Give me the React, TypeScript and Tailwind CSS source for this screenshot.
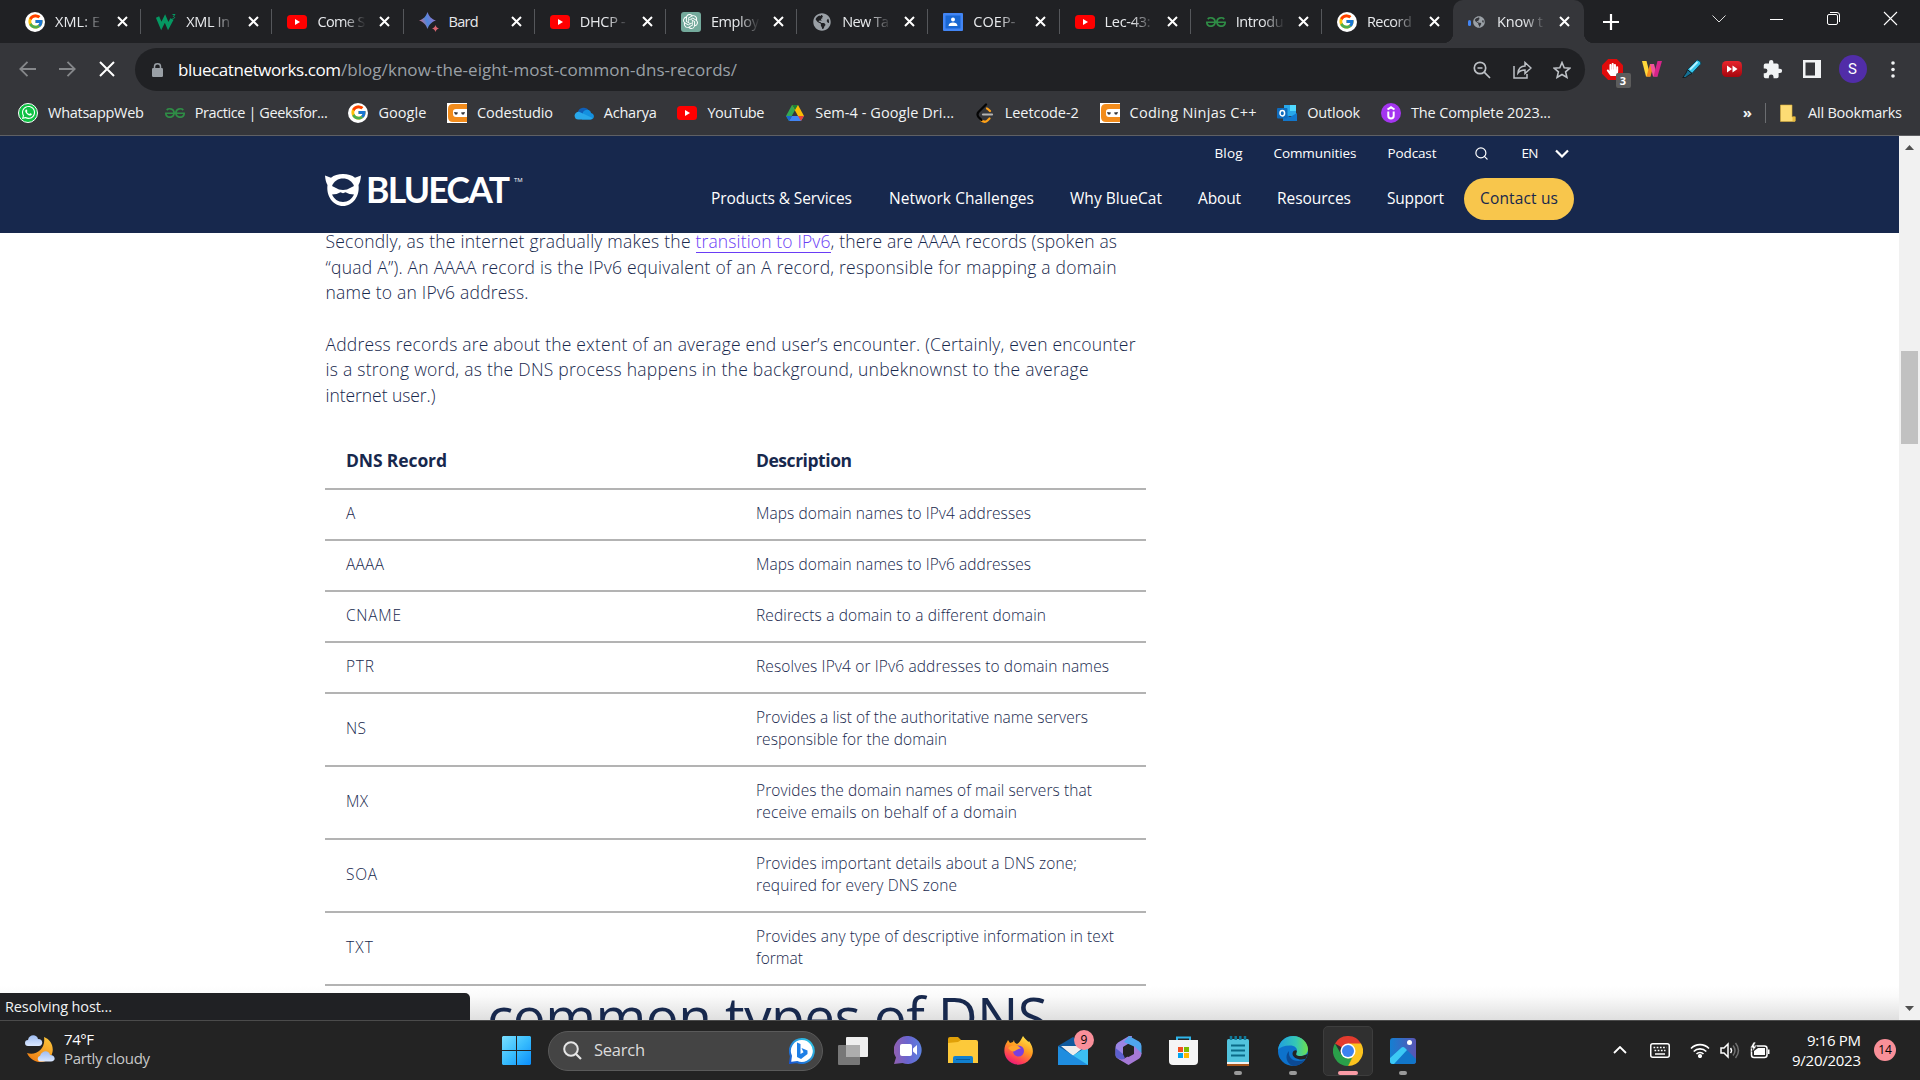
import { useLayoutEffect, useRef, useState, type ReactNode } from "react";
import { FcGoogle } from "react-icons/fc";
import { FaWhatsapp, FaGlobeAmericas, FaHandPaper } from "react-icons/fa";
import { SiGeeksforgeeks, SiOpenai } from "react-icons/si";
import { Search } from "lucide-react";

/** Single line of text whose tracking is adjusted so that it fills a measured width. */
function Fit({ w, className = "", children }: { w: number; className?: string; children: ReactNode }) {
  const ref = useRef<HTMLSpanElement>(null);
  const [spacing, setSpacing] = useState(0);
  useLayoutEffect(() => {
    const el = ref.current;
    if (!el) return;
    const count = (el.textContent ?? "").length;
    if (count > 1) setSpacing((w - el.getBoundingClientRect().width) / (count - 1));
  }, [w]);
  return (
    <span className={"block shrink-0 whitespace-nowrap " + className} style={{ width: w }}>
      <span ref={ref} style={{ letterSpacing: spacing }}>{children}</span>
    </span>
  );
}

const UI = "font-['Open_Sans','Noto_Sans',sans-serif]";

/* ---------- favicons ---------- */
function Google() {
  return (
    <span className="flex size-5 items-center justify-center rounded-full bg-white">
      <FcGoogle size={17} />
    </span>
  );
}
function YouTube() {
  return (
    <svg className="h-5 w-5" viewBox="0 0 20 20">
      <rect y="3" width="20" height="14" rx="3.500" fill="#f00" />
      <path d="M8 7v6l5-3z" fill="#fff" />
    </svg>
  );
}
function W3() {
  return (
    <svg className="h-5 w-5" viewBox="0 0 20 20" fill="none">
      <path d="M1.500 5l3.800 9L9 6.500l3.200 7.500L16 7" stroke="#059862" strokeWidth="3.600" />
      <path d="M16.500 2.500h2.500l-1.700 2c2 .2 1.700 2.500-.8 2" stroke="#059862" strokeWidth="1" />
    </svg>
  );
}
function Bard() {
  return (
    <svg className="h-5 w-5" viewBox="0 0 20 20">
      <defs>
        <linearGradient id="bard" x1="0" x2="1" y1=".7" y2=".3">
          <stop offset="0" stopColor="#e8697b" /><stop offset=".45" stopColor="#4e87dc" /><stop offset="1" stopColor="#9b72cb" />
        </linearGradient>
      </defs>
      <path d="M8.500 0c1.500 4.500 4 7 8.500 8.500-4.500 1.500-7 4-8.500 8.500C7 12.500 4.500 10 0 8.500 4.500 7 7 4.500 8.500 0z" fill="url(#bard)" />
      <path d="M16.500 13c.5 2 1.500 3 3.500 3.500-2 .5-3 1.500-3.500 3.500-.5-2-1.500-3-3.500-3.500 2-.5 3-1.500 3.500-3.500z" fill="#d96570" />
    </svg>
  );
}
function ChatGpt() {
  return (
    <span className="flex size-5 items-center justify-center rounded-[3px] bg-[#74aa9c] text-white">
      <SiOpenai size={15} />
    </span>
  );
}
function Classroom() {
  return (
    <svg className="h-[18px] w-5" viewBox="0 0 20 18">
      <rect width="20" height="18" rx="1" fill="#4285f4" />
      <rect x="2.500" y="2.500" width="15" height="13" fill="#1967d2" />
      <circle cx="10" cy="6.500" r="2" fill="#fff" />
      <path d="M5.500 13c0-2.500 2-3.500 4.500-3.500s4.500 1 4.500 3.500z" fill="#fff" />
    </svg>
  );
}
function Loading() {
  return (
    <span className="flex size-5 items-center">
      <span className="mt-[2px] ml-px h-[6px] w-[3px] rounded bg-[#4285f4]" />
      <FaGlobeAmericas size={12} className="ml-[2px] text-[#9aa0a6]" />
    </span>
  );
}
function Ninja() {
  return (
    <svg className="h-5 w-5" viewBox="0 0 20 20">
      <rect width="20" height="20" fill="#fff" />
      <path d="M20 1H6Q1 1 1 6v8q0 5 5 5h14v-5H9q-3 0-3-3V8.500q0-2.500 3-2.500h11z" fill="#f28c1c" />
      <path d="M7 8h12v4.500H7z" fill="#fff" />
      <path d="M7 9l4 .5-1 2H8zM18 9l-4 .5 1 2h2z" fill="#35363a" />
    </svg>
  );
}
function Whatsapp() {
  return (
    <span className="flex size-5 items-center justify-center rounded-full border border-white bg-[#0dc143] text-white">
      <FaWhatsapp size={15} />
    </span>
  );
}
function Gfg() {
  return <SiGeeksforgeeks size={20} className="text-[#2f8d46]" />;
}
function OneDrive() {
  return (
    <svg className="h-5 w-5" viewBox="0 0 20 20">
      <path d="M4 9a6 5.500 0 0 1 11-1.500L10 14 1 12z" fill="#0f5fb8" />
      <path d="M9 9c3-4 8-2 8 1 4 .5 4 6.500-.5 6.500H8z" fill="#1490df" />
      <path d="M1.500 15.500C-1 12 2 8.500 5 8.800l5 2.200 8.500 4q-1 1.500-2.500 1.500H4.500q-2 0-3-1z" fill="#28a8ea" />
    </svg>
  );
}
function Drive() {
  return (
    <svg className="h-[18px] w-5" viewBox="0 0 20 18">
      <path d="M7 1L1 12l3 5 6-11z" fill="#34a853" />
      <path d="M7 1h6l6 11h-6z" fill="#fbbc04" />
      <path d="M4 17l3-5h12l-3 5z" fill="#4285f4" />
      <path d="M13 12h6l-3 5z" fill="#ea4335" />
      <path d="M7 1h6l-3 5z" fill="#188038" />
      <path d="M1 12h6l-3 5z" fill="#1967d2" />
    </svg>
  );
}
function Leetcode() {
  return (
    <svg className="h-5 w-5" viewBox="0 0 20 20" fill="none" strokeWidth="2.200" strokeLinecap="round">
      <path d="M12 5.500q1 .3 3 2.500M6.500 17.500q3.500 2.500 6 0l2-2" stroke="#ffa116" />
      <path d="M11 1.500L3.500 9q-2 2.500 0 5l3 3" stroke="#050505" />
      <path d="M8 11.500h9" stroke="#b3b3b3" />
    </svg>
  );
}
function Outlook() {
  return (
    <svg className="h-5 w-5" viewBox="0 0 20 20">
      <rect x="7" y="2" width="12" height="11" fill="#28a8ea" />
      <rect x="13" y="2" width="6" height="6" fill="#50d9ff" />
      <path d="M6 10l7 4 7-4v8H6z" fill="#1277cc" />
      <rect y="5" width="10.500" height="10.500" rx="1" fill="#0f6cbd" />
      <ellipse cx="5.300" cy="10.200" rx="2.300" ry="2.700" fill="none" stroke="#fff" strokeWidth="1.500" />
    </svg>
  );
}
function Udemy() {
  return (
    <svg className="h-5 w-5" viewBox="0 0 20 20">
      <circle cx="10" cy="10" r="10" fill="#a435f0" />
      <path d="M6.500 6.500L10 4.300l3.500 2.200M7.300 8.500v4.200q0 2.800 2.700 2.800t2.700-2.800V8.500" fill="none" stroke="#fff" strokeWidth="2" />
    </svg>
  );
}

function X({ s = 10, c = "#fff", t = 2 }: { s?: number; c?: string; t?: number }) {
  return (
    <svg width={s} height={s} viewBox="0 0 10 10" className="shrink-0 overflow-visible">
      <path d="M0 0L10 10M10 0L0 10" stroke={c} strokeWidth={(t * 10) / s} />
    </svg>
  );
}

/* ---------- tab strip ---------- */
const tabs: { icon: ReactNode; title: string; w: number }[] = [
  { icon: <Google />, title: "XML: E", w: 45 },
  { icon: <W3 />, title: "XML In", w: 44 },
  { icon: <YouTube />, title: "Come S", w: 48 },
  { icon: <Bard />, title: "Bard", w: 30 },
  { icon: <YouTube />, title: "DHCP -", w: 46 },
  { icon: <ChatGpt />, title: "Employ", w: 48 },
  { icon: <FaGlobeAmericas size={18} className="text-[#9aa0a6]" />, title: "New Ta", w: 47 },
  { icon: <Classroom />, title: "COEP-", w: 42 },
  { icon: <YouTube />, title: "Lec-43:", w: 46 },
  { icon: <Gfg />, title: "Introdu", w: 48 },
  { icon: <Google />, title: "Record", w: 45 },
];

function TabBody({ icon, title, w }: { icon: ReactNode; title: string; w: number }) {
  return (
    <>
      <span className="flex w-5 shrink-0 items-center justify-center">{icon}</span>
      <span className={"ml-[10px] w-[49px] shrink-0 overflow-hidden " + (title === "Bard" ? "" : "[mask-image:linear-gradient(to_right,#000_55%,transparent)]")}>
        <Fit w={w}>{title}</Fit>
      </span>
      <span className="ml-[14px]"><X s={9} /></span>
    </>
  );
}

function TabStrip() {
  return (
    <div className="flex h-[43px] items-stretch bg-[#202124] text-[14.500px] text-[#e8eaed]">
      <div className="flex w-[1453px] shrink-0 items-center pl-[10px]">
        {tabs.map((t, i) => (
          <div key={i} className={"flex h-[25px] w-[131.2px] shrink-0 items-center pl-[15px] " + (i < 10 ? "border-r border-[#55575b]" : "")}>
            <TabBody {...t} />
          </div>
        ))}
      </div>
      <div className="relative flex w-[131px] shrink-0 items-center rounded-t-[10px] bg-[#35363a] pl-[14px]">
        <span className="absolute -left-[10px] bottom-0 size-[10px] bg-[radial-gradient(circle_at_0_0,transparent_10px,#35363a_10.500px)]" />
        <span className="absolute -right-[10px] bottom-0 size-[10px] bg-[radial-gradient(circle_at_100%_0,transparent_10px,#35363a_10.500px)]" />
        <TabBody icon={<Loading />} title="Know t" w={46} />
      </div>
      <div className="flex w-[54px] items-center justify-center">
        <svg width="16" height="16" viewBox="0 0 16 16"><path d="M8 0v16M0 8h16" stroke="#fff" strokeWidth="2.200" /></svg>
      </div>
      <div className="ml-auto flex items-center gap-[44px] pr-[23px] pb-[6px]">
        <svg width="14" height="8" viewBox="0 0 14 8" fill="none" stroke="#ddd"><path d="M.5.500L7 7 13.500.500" /></svg>
        <svg width="13" height="8" viewBox="0 0 13 8"><path d="M0 4.500h13" stroke="#fff" /></svg>
        <svg width="13" height="13" viewBox="0 0 13 13" fill="none" stroke="#fff"><rect x=".5" y="2.500" width="10" height="10" rx="1.500" /><path d="M3 .5h7q2.500 0 2.500 2.500v7" /></svg>
        <X s={13} t={1.1} />
      </div>
    </div>
  );
}

/* ---------- toolbar ---------- */
function Slot({ w, children }: { w: string; children: ReactNode }) {
  return <span className={"flex shrink-0 items-center justify-center " + w}>{children}</span>;
}

function Toolbar() {
  return (
    <div className="flex h-[53px] items-center bg-[#35363a]">
      <div className="flex w-[135px] shrink-0 items-center pl-[7px] pb-[1px]">
        <Slot w="w-10"><svg width="17" height="16" viewBox="0 0 17 16" fill="none" stroke="#85878a" strokeWidth="1.800"><path d="M17 8H1.500M8.500.800L1.300 8l7.200 7.200" /></svg></Slot>
        <Slot w="w-10"><svg width="17" height="16" viewBox="0 0 17 16" fill="none" stroke="#85878a" strokeWidth="1.800"><path d="M0 8h15.500M8.500.800L15.700 8l-7.200 7.200" /></svg></Slot>
        <Slot w="w-10"><X s={14} t={2} /></Slot>
      </div>
      <div className="flex h-[43px] w-[1450px] shrink-0 items-center rounded-full bg-[#202124] pl-[17px]">
        <svg width="11" height="14" viewBox="0 0 11 14"><rect y="5" width="11" height="9" rx="1.200" fill="#9aa0a6" /><path d="M2.500 6V3.500a3 2.700 0 0 1 6 0V6" fill="none" stroke="#9aa0a6" strokeWidth="1.500" /></svg>
        <Fit w={163} className="ml-[15px] text-[17px] text-white">bluecatnetworks.com</Fit>
        <Fit w={396} className="text-[17px] text-[#9aa0a6]">/blog/know-the-eight-most-common-dns-records/</Fit>
        <div className="ml-auto flex pr-[3px]">
          <Slot w="w-10"><svg width="18" height="18" viewBox="0 0 18 18" fill="none" stroke="#bdc1c6" strokeWidth="1.700"><circle cx="7" cy="7" r="5.700" /><path d="M11.200 11.200L17 17M4.500 7h5" /></svg></Slot>
          <Slot w="w-10"><svg width="19" height="18" viewBox="0 0 19 18" fill="none" stroke="#bdc1c6" strokeWidth="1.500"><path d="M1 5v12h13v-4" /><path d="M5 12c.5-4.500 3-7 7-7V1.500l6 5.500-6 5.500V9c-3 0-5 .5-7 3z" /></svg></Slot>
          <Slot w="w-10"><svg width="18" height="18" viewBox="0 0 18 18" fill="none" stroke="#bdc1c6" strokeWidth="1.600"><path d="M9 1.500l2.200 5.200 5.600.5-4.200 3.700 1.300 5.500L9 13.500l-4.900 2.900 1.300-5.500L1.200 7.200l5.600-.5z" /></svg></Slot>
        </div>
      </div>
      <div className="ml-[7px] flex items-center pb-[1px]">
        <Slot w="w-10">
          <span className="relative flex size-[21px] items-center justify-center text-white">
            <svg className="absolute inset-0" width="21" height="21" viewBox="0 0 21 21"><path d="M6.200 0h8.600L21 6.200v8.600L14.800 21H6.200L0 14.800V6.200z" fill="#e00b0b" /></svg>
            <FaHandPaper size={13} className="relative" />
            <span className="absolute -right-[8px] -bottom-[8px] flex h-[15px] w-[15px] items-center justify-center rounded-[2px] bg-[#5c5c5c] text-[11px] font-bold leading-none">3</span>
          </span>
        </Slot>
        <Slot w="w-10"><svg width="20" height="16" viewBox="0 0 20 16"><path d="M0 0h4.500l4 15.500H4z" fill="#ffd83a" /><path d="M4.500 15.500L8 3h4l-3.500 12.500z" fill="#f58a1f" /><path d="M8 3h4l3.500 12.500h-4.500z" fill="#f0529c" /><path d="M11.500 15.500L15.500 0H20l-4.500 15.500z" fill="#d6248a" /></svg></Slot>
        <Slot w="w-10"><svg width="20" height="20" viewBox="0 0 20 20"><path d="M14.500 1.500q1-1 2.500.200l1.500 1.300q1 1 0 2.200L10 14.500l-4.500-3.800z" fill="#35c4ea" stroke="#0b3f52" /><path d="M5.500 10.700l4.500 3.800-3 1.500-3.500 2.500H.8L4 14z" fill="#156f92" stroke="#111" strokeWidth=".8" /><path d="M15.500 3L8 10.500" stroke="#b6f1ff" strokeWidth="1.800" /></svg></Slot>
        <Slot w="w-10"><svg width="20" height="16" viewBox="0 0 20 16"><defs><linearGradient id="enh" x1="0" x2="0" y1="0" y2="1"><stop offset="0" stopColor="#e8252c" /><stop offset="1" stopColor="#a5060d" /></linearGradient></defs><rect width="20" height="16" rx="4.500" fill="url(#enh)" /><path d="M5 4.500L10 8l-5 3.500zM10.500 4.500L15.500 8l-5 3.500z" fill="#fff" /></svg></Slot>
        <Slot w="w-10"><svg width="21" height="21" viewBox="0 0 24 24" fill="#f1f3f4"><path d="M20.500 11H19V7a2 2 0 0 0-2-2h-4V3.500a2.500 2.500 0 0 0-5 0V5H4a2 2 0 0 0-2 2v3.800h1.500a2.700 2.700 0 0 1 0 5.400H2V20a2 2 0 0 0 2 2h3.800v-1.500a2.700 2.700 0 0 1 5.400 0V22H17a2 2 0 0 0 2-2v-4h1.500a2.500 2.500 0 0 0 0-5z" /></svg></Slot>
        <Slot w="w-10"><svg width="18" height="18" viewBox="0 0 18 18"><rect x="1.250" y="1.250" width="15.500" height="15.500" fill="none" stroke="#f1f3f4" strokeWidth="2.500" /><rect x="12" width="6" height="18" fill="#f1f3f4" /></svg></Slot>
        <Slot w="w-[41px]"><span className="flex size-7 items-center justify-center rounded-full bg-[#512da8] font-[Roboto,sans-serif] text-[15px] text-white">S</span></Slot>
        <Slot w="w-10"><svg width="4" height="17" viewBox="0 0 4 17" fill="#f1f3f4"><circle cx="2" cy="2" r="1.800" /><circle cx="2" cy="8.500" r="1.800" /><circle cx="2" cy="15" r="1.800" /></svg></Slot>
      </div>
    </div>
  );
}

const bookmarks: { icon: ReactNode; text: string; w: number }[] = [
  { icon: <Whatsapp />, text: "WhatsappWeb", w: 96 },
  { icon: <Gfg />, text: "Practice | Geeksfor...", w: 133 },
  { icon: <Google />, text: "Google", w: 48 },
  { icon: <Ninja />, text: "Codestudio", w: 76 },
  { icon: <OneDrive />, text: "Acharya", w: 53 },
  { icon: <YouTube />, text: "YouTube", w: 57 },
  { icon: <Drive />, text: "Sem-4 - Google Dri...", w: 139 },
  { icon: <Leetcode />, text: "Leetcode-2", w: 74 },
  { icon: <Ninja />, text: "Coding Ninjas C++", w: 127 },
  { icon: <Outlook />, text: "Outlook", w: 53 },
  { icon: <Udemy />, text: "The Complete 2023...", w: 140 },
];

function Bookmarks() {
  return (
    <div className="flex h-[40px] items-center border-b border-[#5f6064] bg-[#35363a] pb-[6px] pl-[18px] text-[14.500px] text-[#f1f3f4]">
      <div className="flex items-center gap-[20.700px]">
        {bookmarks.map((b) => (
          <div key={b.text} className="flex shrink-0 items-center gap-[10px]">
            <span className="flex w-5 items-center justify-center">{b.icon}</span>
            <Fit w={b.w}>{b.text}</Fit>
          </div>
        ))}
      </div>
      <div className="ml-auto flex items-center pr-[18px]">
        <span className="mr-[13px] text-[15px] font-bold leading-none">»</span>
        <span className="mr-[14px] h-5 w-px bg-[#6b6d70]" />
        <svg width="16" height="18" viewBox="0 0 16 18"><path d="M.500 1h11.500v12h3v4.500H.500z" fill="#fddc74" stroke="#d9ae3a" strokeWidth=".6" /><path d="M12.500 12.500h3V17h-3z" fill="#e8bb3c" /></svg>
        <Fit w={94} className="ml-[12px]">All Bookmarks</Fit>
      </div>
    </div>
  );
}

/* ---------- site ---------- */
function SiteHeader() {
  return (
    <header className="flex h-[97px] w-full bg-[#17284d] pl-[325px] text-white">
      <div className="flex h-8 w-[386px] shrink-0 mt-[38px]">
        <svg width="36" height="32" viewBox="0 0 36 32">
          <path d="M0 1.500l6 2.200C9 1.200 13 0 18 0s9 1.200 12 3.700l6-2.200c-.3 4-1 7-2.500 9.500C35 22 28 32 18 32S1 22 2.500 11C1 8.500.3 5.500 0 1.500z" fill="#fff" />
          <path d="M7 12c2-5 6-7.500 11-7.500s9 2.500 11 7.500l-7 3.500-4 .5-4-.5z" fill="#17284d" />
          <path d="M7 20.500q5 0 8.500-2.300l2.500 1 2.500-1q3.500 2.300 8.500 2.300c-2 4.500-6 7.500-11 7.500S9 25 7 20.500z" fill="#17284d" />
        </svg>
        <Fit w={144} className="ml-[5px] -mt-[2px] font-[Lato,sans-serif] text-[35.500px] font-bold leading-[36px]">BLUECAT</Fit>
        <span className="ml-[4px] mt-[2px] text-[6px] leading-[8px]">TM</span>
      </div>
      <div className="flex flex-col">
        <div className="flex h-[35px] items-center pl-[503.500px] text-[13.500px] font-medium">
          <Fit w={28}>Blog</Fit>
          <Fit w={83} className="ml-[31px]">Communities</Fit>
          <Fit w={49} className="ml-[31px]">Podcast</Fit>
          <Search size={15} strokeWidth={1.9} className="ml-[37px]" />
          <Fit w={17} className="ml-[33px] font-normal">EN</Fit>
          <svg className="ml-[16px]" width="14" height="9" viewBox="0 0 14 9"><path d="M1 1.500l6 6 6-6" fill="none" stroke="#fff" strokeWidth="2.200" /></svg>
        </div>
        <nav className="mt-[7px] flex h-[42px] items-center text-[15.500px] font-medium">
          <Fit w={141}>Products &amp; Services</Fit>
          <Fit w={145} className="ml-[37px]">Network Challenges</Fit>
          <Fit w={92} className="ml-[36px]">Why BlueCat</Fit>
          <Fit w={43} className="ml-[36px]">About</Fit>
          <Fit w={74} className="ml-[36px]">Resources</Fit>
          <Fit w={57} className="ml-[36px]">Support</Fit>
          <span className="ml-[20px] flex h-[42px] w-[110px] items-center justify-center rounded-full bg-[#f8c64c] text-[#17284d]">
            <Fit w={78} className="font-normal">Contact us</Fit>
          </span>
        </nav>
      </div>
    </header>
  );
}

const rows: { name: string; nw: number; lines: [string, number][] }[] = [
  { name: "A", nw: 9, lines: [["Maps domain names to IPv4 addresses", 275]] },
  { name: "AAAA", nw: 38, lines: [["Maps domain names to IPv6 addresses", 275]] },
  { name: "CNAME", nw: 55, lines: [["Redirects a domain to a different domain", 290]] },
  { name: "PTR", nw: 28, lines: [["Resolves IPv4 or IPv6 addresses to domain names", 353]] },
  { name: "NS", nw: 20, lines: [["Provides a list of the authoritative name servers", 332], ["responsible for the domain", 191]] },
  { name: "MX", nw: 22, lines: [["Provides the domain names of mail servers that", 336], ["receive emails on behalf of a domain", 261]] },
  { name: "SOA", nw: 31, lines: [["Provides important details about a DNS zone;", 321], ["required for every DNS zone", 201]] },
  { name: "TXT", nw: 27, lines: [["Provides any type of descriptive information in text", 358], ["format", 47]] },
];

function Article() {
  return (
    <article className="h-[787px] overflow-hidden bg-white pl-[325px] font-light text-[#17284d]">
      <div className="-mt-[4px] pl-[0.5px] text-[17.500px] leading-[25.600px]">
        <div className="flex">
          <Fit w={365}>Secondly, as the internet gradually makes the</Fit>
          <Fit w={135} className="ml-[5px] h-[24px] border-b border-[#6a3df5] text-[#6a3df5]">transition to IPv6</Fit>
          <Fit w={286.5}>, there are AAAA records (spoken as</Fit>
        </div>
        <Fit w={791}>“quad A”). An AAAA record is the IPv6 equivalent of an A record, responsible for mapping a domain</Fit>
        <Fit w={203}>name to an IPv6 address.</Fit>
        <Fit w={810} className="mt-[26px]">Address records are about the extent of an average end user’s encounter. (Certainly, even encounter</Fit>
        <Fit w={763}>is a strong word, as the DNS process happens in the background, unbeknownst to the average</Fit>
        <Fit w={110}>internet user.)</Fit>
      </div>
      <div className="mt-[23px] w-[821px] text-[15.500px] leading-[22px]">
        <div className="flex h-[58px] items-center border-b-2 border-[#b3b3b3] pl-[21px] text-[17.500px] font-bold">
          <div className="w-[410px]"><Fit w={101}>DNS Record</Fit></div>
          <Fit w={96}>Description</Fit>
        </div>
        {rows.map((r) => (
          <div key={r.name} className={"flex items-center border-b-2 border-[#b3b3b3] pb-[2px] pl-[21px] " + (r.lines.length > 1 ? "h-[73px]" : "h-[51px]")}>
            <div className="w-[410px]"><Fit w={r.nw}>{r.name}</Fit></div>
            <div>{r.lines.map(([t, w]) => <Fit key={t} w={w}>{t}</Fit>)}</div>
          </div>
        ))}
      </div>
      <div className="-ml-[325px] h-[35px] overflow-hidden bg-[linear-gradient(to_bottom,#fff,#fafafa_30%,#dedede)] pl-[487px] text-[55px] font-normal leading-[60px]">
        <Fit w={561}>common types of DNS</Fit>
      </div>
    </article>
  );
}

function Scrollbar() {
  return (
    <div className="flex w-[21px] shrink-0 flex-col items-center bg-[#f1f1f1]">
      <svg className="mt-[9px]" width="9" height="5" viewBox="0 0 9 5"><path d="M0 5L4.500 0 9 5z" fill="#505050" /></svg>
      <div className="mt-[201px] h-[93px] w-[17px] bg-[#c1c1c1]" />
      <svg className="mt-auto mb-[9px]" width="9" height="5" viewBox="0 0 9 5"><path d="M0 0h9L4.500 5z" fill="#505050" /></svg>
    </div>
  );
}

/* ---------- taskbar ---------- */
function TaskButton({ children, mark = "" }: { children: ReactNode; mark?: "" | "open" | "active" }) {
  return (
    <div className={"relative flex h-[50px] w-[50px] shrink-0 items-center justify-center rounded-[5px] border " + (mark === "active" ? "border-[#3d3d3d] bg-[#303030]" : "border-transparent")}>
      {children}
      {mark === "open" && <span className="absolute bottom-0 h-[4px] w-[8px] rounded-full bg-[#9a9a9a]" />}
      {mark === "active" && <span className="absolute bottom-0 h-[4px] w-[20px] rounded-full bg-[#f99ba5]" />}
    </div>
  );
}

function Taskbar() {
  return (
    <div className="relative z-10 flex h-[60px] items-center border-t border-[#4b4b4b] bg-[#232323] text-white">
      <div className="flex w-[491px] shrink-0 items-center pl-[25px] pb-[3px]">
        <svg width="30" height="28" viewBox="0 0 30 28">
          <defs>
            <linearGradient id="moon" x1=".8" x2=".2" y1="0" y2="1"><stop offset="0" stopColor="#fbc43a" /><stop offset="1" stopColor="#f07d12" /></linearGradient>
            <linearGradient id="cloud" x1="0" x2="0" y1="0" y2="1"><stop offset="0" stopColor="#9fbdf2" /><stop offset="1" stopColor="#dbe8ff" /></linearGradient>
          </defs>
          <path d="M19 2c8 3 11 12 7 19-5 9-19 8-24-3 9 3 19-4 17-16z" fill="url(#moon)" />
          <path d="M3 11a3 3 0 0 1 0-6C4-1 12-1 13 4c6 0 5 7 1 7z" fill="url(#cloud)" />
          <path d="M15 26.500c-3-.5-3-5 0-5.500 2-6 9-6 10-1 6 0 6 6.500 1 6.500z" fill="url(#cloud)" />
        </svg>
        <div className="ml-[9px] text-[15px] leading-[19.500px]">
          <Fit w={30}>74°F</Fit>
          <Fit w={86} className="text-[#c8c8c8]">Partly cloudy</Fit>
        </div>
      </div>
      <TaskButton>
        <svg width="29" height="29" viewBox="0 0 29 29">
          <defs><linearGradient id="win" x1="0" x2="1" y1="0" y2="1"><stop offset="0" stopColor="#7adfff" /><stop offset=".5" stopColor="#39bdfd" /><stop offset="1" stopColor="#0a8dfb" /></linearGradient></defs>
          <path d="M1 0h13v14H0V1zM15 0h13l1 1v13H15zM0 15h14v14H1l-1-1zM15 15h14v13l-1 1H15z" fill="url(#win)" />
        </svg>
      </TaskButton>
      <div className="ml-[7px] flex h-10 w-[275px] shrink-0 items-center rounded-full border border-[#5a5a5a] bg-[#444] pl-[14px] pr-[7px]">
        <svg width="19" height="19" viewBox="0 0 19 19"><circle cx="8" cy="8" r="6.800" fill="#5c5c5c" stroke="#e6e6e6" strokeWidth="2" /><path d="M13 13l5 5" stroke="#e6e6e6" strokeWidth="2.200" /></svg>
        <Fit w={51} className="ml-[12px] text-[16.500px] text-[#dcdcdc]">Search</Fit>
        <svg className="ml-auto" width="26" height="26" viewBox="0 0 26 26">
          <defs><linearGradient id="bing" x1="1" x2="0" y1="0" y2="1"><stop offset="0" stopColor="#32d0e8" /><stop offset="1" stopColor="#1855d0" /></linearGradient></defs>
          <path d="M13 1a12 12 0 1 1-5 23L1 25l1-7A12 12 0 0 1 13 1z" fill="#fff" stroke="url(#bing)" strokeWidth="2" />
          <path d="M8 4.500l3.500 1.500v10l3-1.700-2-4.300 6 2.500v3.500L12 21l-4-2z" fill="#1e7fe6" />
        </svg>
      </div>
      <div className="ml-[5px] flex items-center gap-[5px]">
        <TaskButton><svg width="30" height="28" viewBox="0 0 30 28"><rect x="8" width="22" height="20" rx="1" fill="#efefef" /><rect y="8" width="22" height="20" rx="1" fill="#777" /><path d="M8 8h14v12H8z" fill="#adadad" /></svg></TaskButton>
        <TaskButton>
          <svg width="29" height="29" viewBox="0 0 29 29"><defs><linearGradient id="chat" x1="0" x2="1"><stop offset="0" stopColor="#9160b0" /><stop offset=".5" stopColor="#6a64cf" /><stop offset="1" stopColor="#5d82e0" /></linearGradient></defs>
            <path d="M14.500 0a14 14 0 1 1-6 27L0 28l2-6.500A14 14 0 0 1 14.500 0z" fill="url(#chat)" /><rect x="6" y="8" width="12" height="12" rx="2" fill="#fff" /><path d="M19 12.500L23 9v10l-4-3.500z" fill="#fff" /></svg>
        </TaskButton>
        <TaskButton><svg width="30" height="27" viewBox="0 0 30 27"><path d="M0 2q0-2 2-2h8l3 3v4H0z" fill="#e0a008" /><path d="M0 6l10-1 3-2h15q2 0 2 2v21H0z" fill="#fdc93a" /><path d="M5 26v-5q0-2 2-2h16q2 0 2 2v5z" fill="#1180cf" /><path d="M8 22.500h14" stroke="#075a9b" /></svg></TaskButton>
        <TaskButton>
          <svg width="29" height="29" viewBox="0 0 29 29"><defs><linearGradient id="ff" x1=".8" x2=".3" y1="0" y2="1"><stop offset="0" stopColor="#ffe94a" /><stop offset=".45" stopColor="#ff9a1f" /><stop offset=".8" stopColor="#ff3f57" /><stop offset="1" stopColor="#e8187a" /></linearGradient></defs>
            <path d="M19 0c2 3 4 4 5.500 6l.5-1c5 7 5 13 1 18-6 8-18 7-23 0C-1 17 0 10 3 6l1-2 2 3 3-1 1-2c0 2 1 3 3 4 2-1 4-4 6-8z" fill="url(#ff)" />
            <circle cx="14.500" cy="15" r="5.500" fill="#7a3fe0" /><path d="M4 12c3-3 7-3.500 10-2l3 2.500c-3-.5-4 2-7 3-2 0-4-1-6-3.500z" fill="#ffa32c" /></svg>
        </TaskButton>
        <TaskButton>
          <svg width="30" height="28" viewBox="0 0 30 28"><path d="M0 9L15 0l15 9-15 11z" fill="#0f5a9e" /><path d="M3 9h24L15 19z" fill="#eee" /><path d="M30 9v19H0z" fill="#3cc0f4" /><path d="M0 9l30 19H0z" fill="#1f8ddf" /></svg>
          <span className="absolute right-[3px] top-[3px] flex size-5 items-center justify-center rounded-full bg-[#f98f9a] text-[12px] leading-none text-black">9</span>
        </TaskButton>
        <TaskButton>
          <svg width="27" height="29" viewBox="0 0 27 29">
            <path d="M14 0L3 6.500Q.5 8 .5 11v8q0 2 1.500 3l6 3V11l8-5 1-6z" fill="#9a84e4" />
            <path d="M14 0l10 5.500q2.500 1.500 2.500 4.500v8L19 14v-3.500L9 6z" fill="#4fa5ee" />
            <path d="M26.500 17q0 4-3 6l-10 6-11-6.500 6 .5 5-3 5.500-3.500V10z" fill="#a579d6" />
            <path d="M.5 12v7q0 2 2 3.200l4 1.300q2 0 3.500-1.200l-2-4.300z" fill="#5c5fce" />
            <path d="M13.500 8.500l5.500 3v6.500l-5.500 3-5.500-3v-6.500z" fill="#232323" />
          </svg>
        </TaskButton>
        <TaskButton>
          <svg width="29" height="29" viewBox="0 0 29 29"><path d="M8 6V1.500h13V6" fill="none" stroke="#2fb5ea" strokeWidth="2" /><path d="M0 4h29v21q0 4-4 4H4q-4 0-4-4z" fill="#f5f5f5" /><path d="M9 11h5v5H9z" fill="#f25022" /><path d="M15 11h5v5h-5z" fill="#7fba00" /><path d="M9 17h5v5H9z" fill="#00a4ef" /><path d="M15 17h5v5h-5z" fill="#ffb900" /></svg>
        </TaskButton>
        <TaskButton mark="open">
          <svg width="22" height="30" viewBox="0 0 22 30"><rect y="3" width="22" height="26" rx="1.500" fill="#52c3dd" /><path d="M0 26h22v2H0z" fill="#f2f2f2" /><path d="M0 28h22v2H0z" fill="#a8561b" /><path d="M4 9.500h14M4 14.500h14M4 19.500h14" stroke="#0a6a88" strokeWidth="2" /><path d="M4 0v4M8.700 0v4M13.300 0v4M18 0v4" stroke="#0f7a9a" strokeWidth="2.500" /></svg>
        </TaskButton>
        <TaskButton mark="open">
          <svg width="30" height="30" viewBox="0 0 30 30"><defs><linearGradient id="eg" x1="0" x2="1"><stop offset="0" stopColor="#1f9fe0" /><stop offset=".6" stopColor="#35c7b5" /><stop offset="1" stopColor="#6ee04a" /></linearGradient></defs>
            <circle cx="15" cy="15" r="15" fill="#0d72cc" /><path d="M11 15c-1 7 4 12 16 9-4 5-9 6-12 6-6-2-9-10-4-15z" fill="#0c4a94" />
            <path d="M19 16c-1 3 3 5 11 2l-2.500 5c-6 1.500-13-.5-13-5.500 0-3 3-4 4-3q.8.800.5 1.500z" fill="#232323" />
            <path d="M0 14C1 5 8 0 15 0c9 0 15 7 15 13 0 5-4 7-8 7-3 0-4.500-1-3.500-3 2-5-2-7.500-6.500-7.500C6 9.500 2 11 0 14z" fill="url(#eg)" /></svg>
        </TaskButton>
        <TaskButton mark="active">
          <svg width="30" height="30" viewBox="0 0 30 30"><path d="M15 15L2 7.500a15 15 0 0 1 26 0z" fill="#e33b2e" /><path d="M15 15V7.500h13A15 15 0 0 1 15 30l6.500-12z" fill="#fcc31e" /><path d="M2 7.500L8.500 19 15 22v8A15 15 0 0 1 2 7.500z" fill="#2aa04a" /><path d="M21.500 19L15 30l-3-8z" fill="#fcc31e" /><path d="M8.500 19l6.500 3.500 4-.5-4 8a15 15 0 0 1-8-3z" fill="#2aa04a" /><circle cx="15" cy="15" r="7.500" fill="#fff" /><circle cx="15" cy="15" r="6" fill="#3b82f0" /></svg>
        </TaskButton>
        <TaskButton mark="open">
          <svg width="26" height="26" viewBox="0 0 26 26"><defs><linearGradient id="ph" x1="0" x2="1"><stop offset="0" stopColor="#147fd2" /><stop offset="1" stopColor="#5a55b4" /></linearGradient></defs>
            <rect width="26" height="26" rx="3" fill="url(#ph)" /><path d="M0 20L11 10q2-2 4 0l11 11v2q0 3-3 3H3q-3 0-3-3z" fill="#1276c9" /><path d="M0 20L11 10q2-2 4 0l2 2L4 26H3q-3 0-3-3z" fill="#3cc9f5" /><circle cx="19.500" cy="4.500" r="2.500" fill="#fff" /></svg>
        </TaskButton>
      </div>
      <div className="ml-auto flex items-center pr-[24px] pb-[1px]">
        <svg width="14" height="8" viewBox="0 0 14 8"><path d="M1 7l6-6 6 6" fill="none" stroke="#fff" strokeWidth="1.800" /></svg>
        <svg className="ml-[23px]" width="20" height="15" viewBox="0 0 20 15" fill="none" stroke="#fff"><rect x=".75" y=".75" width="18.500" height="13.500" rx="2" strokeWidth="1.500" /><path d="M3.500 4.500h13M4.500 7.500h11" strokeWidth="1.600" strokeDasharray="1.700 1.500" /><path d="M5 11h10" strokeWidth="1.500" /></svg>
        <svg className="ml-[20px]" width="20" height="15" viewBox="0 0 20 15" fill="none" stroke="#fff" strokeWidth="1.600"><path d="M1 5.500a12.500 12.500 0 0 1 18 0M3.700 8.500a8.800 8.800 0 0 1 12.600 0M6.500 11a5 5 0 0 1 7 0" /><circle cx="10" cy="13" r="1.300" fill="#fff" /></svg>
        <svg className="ml-[10px]" width="20" height="17" viewBox="0 0 20 17" fill="none" stroke="#fff" strokeWidth="1.500"><path d="M1 6v5h3l4 4V2L4 6zM10.500 6q2 2.500 0 5" /><path d="M13 3.500q4 5 0 10M15.500 1q6 7.500 0 15" stroke="#707070" /></svg>
        <svg className="ml-[10px]" width="20" height="17" viewBox="0 0 20 17"><rect x="1.500" y="4" width="15.500" height="11.500" rx="2.500" fill="none" stroke="#fff" strokeWidth="1.500" /><path d="M4 13V9l4-3h7v7zM18 7.500h1.500v4.500H18z" fill="#fff" /><path d="M3.500 0L0 6h3L2 10l5-6H4L6 0z" fill="#fff" stroke="#232323" strokeWidth=".7" /></svg>
        <div className="ml-[21px] flex w-[70px] flex-col items-end text-[15px] leading-[20px]">
          <Fit w={54}>9:16 PM</Fit>
          <Fit w={69}>9/20/2023</Fit>
        </div>
        <span className="ml-[13px] flex size-[22px] items-center justify-center rounded-full bg-[#f99099] text-[12px] leading-none text-black">14</span>
      </div>
    </div>
  );
}

export default function App() {
  return (
    <div className={"flex h-[1080px] w-[1920px] flex-col overflow-hidden bg-white " + UI}>
      <TabStrip />
      <Toolbar />
      <Bookmarks />
      <main className="relative flex h-[884px] shrink-0">
        <div className="w-[1899px]">
          <SiteHeader />
          <Article />
        </div>
        <Scrollbar />
        <div className="absolute bottom-0 left-0 flex h-[27px] w-[470px] items-center rounded-tr-[5px] bg-[#202124] pl-[5px] text-[14.500px] text-[#f1f3f4]">
          <Fit w={107}>Resolving host...</Fit>
        </div>
      </main>
      <Taskbar />
    </div>
  );
}
